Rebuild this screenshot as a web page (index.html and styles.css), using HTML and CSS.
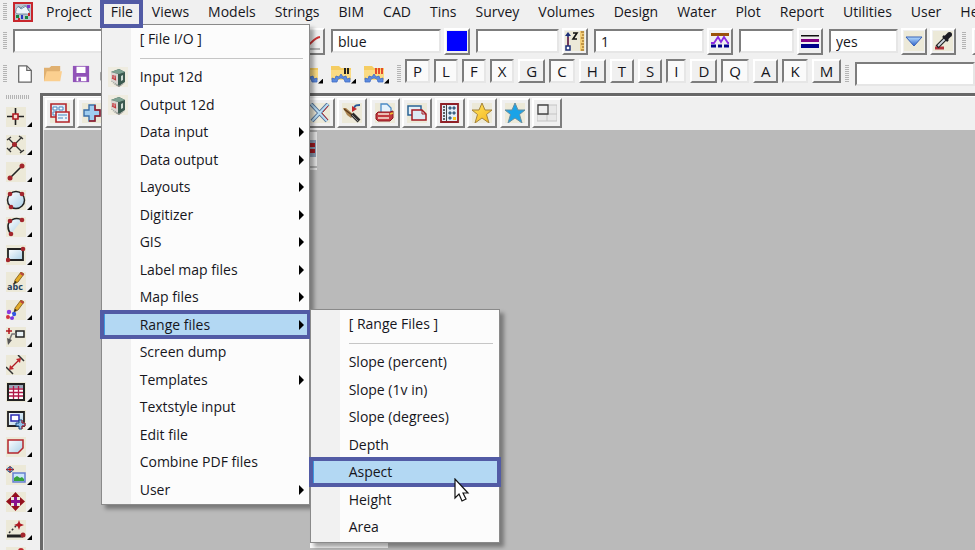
FILE: index.html
```html
<!DOCTYPE html>
<html lang="en">
<head>
<meta charset="utf-8">
<meta name="viewport" content="width=device-width, initial-scale=1">
<title>12d Model</title>
<link rel="stylesheet" href="styles.css">
</head>
<body>
<svg class="defs" aria-hidden="true">
  <defs>
    <linearGradient id="g-blue" x1="0" y1="0" x2="1" y2="1"><stop offset="0" stop-color="#fff"/><stop offset="1" stop-color="#a9cfe6"/></linearGradient>
    <linearGradient id="g-down" x1="0" y1="0" x2="0" y2="1"><stop offset="0" stop-color="#b5dcff"/><stop offset="1" stop-color="#2e62c8"/></linearGradient>
    <linearGradient id="g-gold" x1="0" y1="0" x2="1" y2="1"><stop offset="0" stop-color="#ffe45c"/><stop offset="1" stop-color="#f5b51e"/></linearGradient>
    <symbol id="i-plus" viewBox="0 0 20 20"><path d="M7 2h6v5h5v6h-5v5H7v-5H2V7h5z" fill="#9fcdf0" stroke="#3a6da6" stroke-width="1.4"/><path d="M13 2v5h5v6h-5v5H7" fill="none" stroke="#a31a22" stroke-width="1.4"/></symbol>
    <symbol id="i-folder-gear" viewBox="0 0 20 20"><path d="M0 2h8l2 2h10v12H0z" fill="#f5cd62"/><path d="M0 6h20v10H0z" fill="#fbdb83"/><path d="M1 18v-4l3 1 1-3 3 1 2-3 2 3 3-1 1 3 3-1v4h-5a4 4 0 0 0-8 0z" fill="#5b8ae0" stroke="#3f6cc4" stroke-width=".8"/></symbol>
    <symbol id="i-cube" viewBox="0 0 20 20"><path d="M0 0h20v20H0z" fill="#efece0"/><path d="M3 5l8-3 6 3v10l-6 4-8-5z" fill="#3c5a50"/><path d="M3 5l8-3 6 3-6 2z" fill="#7da191"/><path d="M3 5l7 2v11l-7-4z" fill="#d9d5d2"/><path d="M5 8v4M7 8.500l.5 5M4 11l4 2" stroke="#c4343a" stroke-width="1.300"/><path d="M13 9l2-1v5l-2 1z" fill="#cfdcd4"/><path d="M4 16l7 3 6-3-6 4z" fill="#777"/></symbol>
  </defs>
</svg>

<nav class="menubar" aria-label="Main menu">
  <span class="grip"></span>
  <svg class="app-icon" viewBox="0 0 20 20"><path d="M1 1h18v18H1z" fill="#b9c3cf" stroke="#c8262c" stroke-width="2"/><path d="M3 9c0-5 4-5 5-3 3-4 9-2 7 2 3 1 1 5-2 4H5c-2 0-3-2-2-3z" fill="#eef4f8" stroke="#5d7890" stroke-width=".8"/><path d="M5 4l3 3 5-3 3 5" stroke="#6f8fa8" fill="none"/><path d="M3 13h3v3H3zM12 14h3v3h-3z" fill="#17883d"/><path d="M8 13h2v4H8z" fill="#2737c3"/><path d="M15 11h2v3h-2zM5 16h2v2H5z" fill="#c8262c"/><path d="M14 3h3v3h-3z" fill="#7a35c9"/></svg>
  <ul class="menus">
    <li><a href="#">Project</a></li>
    <li class="open"><a href="#">File</a>
      <div class="popup file-popup">
        <ul>
          <li class="title">[ File I/O ]</li>
          <li class="rule"></li>
          <li><svg class="item-icon"><use href="#i-cube"/></svg><a href="#">Input 12d</a></li>
          <li><svg class="item-icon"><use href="#i-cube"/></svg><a href="#">Output 12d</a></li>
          <li class="more"><a href="#">Data input</a></li>
          <li class="more"><a href="#">Data output</a></li>
          <li class="more"><a href="#">Layouts</a></li>
          <li class="more"><a href="#">Digitizer</a></li>
          <li class="more"><a href="#">GIS</a></li>
          <li class="more"><a href="#">Label map files</a></li>
          <li class="more"><a href="#">Map files</a></li>
          <li class="more current"><a href="#">Range files</a>
            <div class="popup range-popup">
              <ul>
                <li class="title">[ Range Files ]</li>
                <li class="rule"></li>
                <li><a href="#">Slope (percent)</a></li>
                <li><a href="#">Slope (1v in)</a></li>
                <li><a href="#">Slope (degrees)</a></li>
                <li><a href="#">Depth</a></li>
                <li class="current"><a href="#">Aspect</a>
                  <svg class="pointer" viewBox="0 0 16 24"><path d="M1 1v19l4-4 3 7 4-2-3-6h5z" fill="#fff" stroke="#111" stroke-width="1.200"/></svg>
                </li>
                <li><a href="#">Height</a></li>
                <li><a href="#">Area</a></li>
              </ul>
            </div>
          </li>
          <li><a href="#">Screen dump</a></li>
          <li class="more"><a href="#">Templates</a></li>
          <li><a href="#">Textstyle input</a></li>
          <li><a href="#">Edit file</a></li>
          <li><a href="#">Combine PDF files</a></li>
          <li class="more"><a href="#">User</a></li>
        </ul>
      </div>
    </li>
    <li><a href="#">Views</a></li>
    <li><a href="#">Models</a></li>
    <li><a href="#">Strings</a></li>
    <li><a href="#">BIM</a></li>
    <li><a href="#">CAD</a></li>
    <li><a href="#">Tins</a></li>
    <li><a href="#">Survey</a></li>
    <li><a href="#">Volumes</a></li>
    <li><a href="#">Design</a></li>
    <li><a href="#">Water</a></li>
    <li><a href="#">Plot</a></li>
    <li><a href="#">Report</a></li>
    <li><a href="#">Utilities</a></li>
    <li><a href="#">User</a></li>
    <li><a href="#">Help</a></li>
  </ul>
</nav>

<div class="bar attributes">
  <span class="grip"></span>
  <div class="field"><input class="w-name" type="text" aria-label="Name"><button aria-label="Pick name"><svg viewBox="0 0 20 20"><path d="M2 15c6 2 8-8 16-9" stroke="#c33" stroke-width="2" fill="none"/><path d="M2 18h16" stroke="#777"/></svg></button></div>
  <div class="field"><input class="w-wide" type="text" value="blue" aria-label="Colour"><button aria-label="Pick colour"><svg viewBox="0 0 20 20"><path d="M0 0h20v20H0z" fill="#00f"/></svg></button></div>
  <div class="field"><input class="w-mid" type="text" aria-label="Height"><button aria-label="Pick height"><svg viewBox="0 0 20 20"><path d="M0 0h20v20H0z" fill="#ece9d8"/><path d="M3 3v12" stroke="#1c2f7a" stroke-width="1.600"/><path d="M0 5l3-4 3 4z" fill="#1c2f7a"/><path d="M3 6v9" stroke="#a02030"/><path d="M1 15h4v4H1z" fill="#fff" stroke="#1c2f7a" stroke-width="1.500"/><path d="M8 2h4L8 8h4" stroke="#111" stroke-width="1.600" fill="none"/><path d="M15 0h4v20h-4z" fill="#f4cf79"/><path d="M19 1h-3M19 4h-2M19 7h-3M19 10h-2M19 13h-3M19 16h-2M19 19h-3" stroke="#8b5a14"/></svg></button></div>
  <div class="field"><input class="w-wide" type="text" value="1" aria-label="Line style"><button aria-label="Pick line style"><svg viewBox="0 0 20 20"><path d="M1 2h18v3H1z" fill="#9a5208"/><path d="M1 12h3l4-6 3 5 3-5 4 6h1" fill="none" stroke="#8a2be2" stroke-width="1.800"/><path d="M1 15h5M8 15h4M14 15h5" stroke="#00008b" stroke-width="3"/></svg></button></div>
  <div class="field"><input class="w-small" type="text" aria-label="Weight"><button aria-label="Pick weight"><svg viewBox="0 0 20 20"><path d="M1 4h18v1.500H1z" fill="#111"/><path d="M1 8h18v3H1z" fill="#800080"/><path d="M1 13h18v4H1z" fill="#00008b"/></svg></button></div>
  <div class="field"><input class="w-yes" type="text" value="yes" aria-label="Tinable"><button aria-label="Show choices"><svg viewBox="0 0 20 20"><path d="M0 0h20v20H0z" fill="#ece9d8"/><path d="M2 6h16l-8 9z" fill="url(#g-down)" stroke="#3560b8"/></svg></button><button aria-label="Pick from string"><svg viewBox="0 0 20 20"><path d="M0 0h20v20H0z" fill="#ece9d8"/><path d="M2 17h9" stroke="#b03038" stroke-width="3"/><path d="M4 16l9-9" stroke="#222" stroke-width="4"/><path d="M5 15l7-7" stroke="#cfd8e0" stroke-width="1.800"/><path d="M10 5l5 5" stroke="#1c1c22" stroke-width="2.500"/><path d="M13 7l3-3" stroke="#1c1c22" stroke-width="5"/><circle cx="16.500" cy="3.500" r="2.500" fill="#1c1c22"/></svg></button></div>
  <span class="grip"></span>
  <button aria-label="Text style"><svg viewBox="0 0 20 20"><path d="M0 17c3 0 5-10 10-12" stroke="#7b50c8" stroke-width="3" fill="none"/></svg></button>
</div>

<div class="bar files">
  <span class="grip"></span>
  <div class="flat">
    <button aria-label="New"><svg viewBox="0 0 20 20"><path d="M3 1h9l5 5v13H3z" fill="#fff" stroke="#666" stroke-width="1.400"/><path d="M12 1v5h5" fill="none" stroke="#666" stroke-width="1.400"/></svg></button>
    <button aria-label="Open"><svg viewBox="0 0 20 20"><path d="M0 18V3h6l2-2h10v6" fill="#e0b070"/><path d="M0 18L3 7h17l-2 11z" fill="#fbcf8f"/></svg></button>
    <button aria-label="Save"><svg viewBox="0 0 20 20"><path d="M1 1h18v18H1z" fill="#9153b8"/><path d="M5 2h10v7H5zM5 13h11v5H5z" fill="#fff"/><path d="M7 14h3v4H7z" fill="#9153b8"/></svg></button>
    <button aria-label="Print"><svg viewBox="0 0 20 20"><path d="M1 8h18v9H1z" fill="#aaa" stroke="#666"/><path d="M5 1h10v7H5z" fill="#fff" stroke="#666"/></svg></button>
  </div>
  <div class="flat drop">
    <button aria-label="Folder 1"><svg><use href="#i-folder-gear"/></svg></button>
    <button aria-label="Folder 2"><svg><use href="#i-folder-gear"/></svg></button>
    <button aria-label="Folder 3"><svg><use href="#i-folder-gear"/></svg></button>
    <button aria-label="Folder 4"><svg><use href="#i-folder-gear"/></svg></button>
    <button aria-label="Folder 5"><svg><use href="#i-folder-gear"/></svg></button>
    <button aria-label="Folder 6"><svg><use href="#i-folder-gear"/></svg></button>
    <button aria-label="Folder settings, black"><svg viewBox="0 0 20 20"><use href="#i-folder-gear"/><path d="M14 4v6M17 4v6" stroke="#222" stroke-width="2"/></svg></button>
    <button aria-label="Folder settings, red"><svg viewBox="0 0 20 20"><use href="#i-folder-gear"/><path d="M12 4v6M15 4v6M18 4v6" stroke="#e02818" stroke-width="1.600"/></svg></button>
  </div>
  <span class="grip"></span>
  <div class="snaps">
    <button class="on">P</button><button class="on">L</button><button class="on">F</button><button class="on">X</button><button>G</button><button class="on">C</button><button>H</button><button>T</button><button>S</button><button class="on">I</button><button>D</button><button class="on">Q</button><button>A</button><button class="on">K</button><button>M</button>
  </div>
  <span class="grip"></span>
  <input class="command" type="text" aria-label="Command">
</div>

<main class="desk">
  <aside class="tools" aria-label="Create tools">
    <span class="grip across"></span>
    <div class="tool-list">
      <button aria-label="Point"><svg viewBox="0 0 20 20"><path d="M9.500 1v17M1 9.500h17" stroke="#222" stroke-width="1.600"/><path d="M7 7h5v5H7z" fill="#f5d9d0" stroke="#b01820" stroke-width="1.600"/></svg></button>
      <button aria-label="Intersection"><svg viewBox="0 0 20 20"><path d="M3 4l13 13M16 2L3 15M1 5l4-3M13 1l4 3M14 18l4-3M1 13l4 4" stroke="#333" stroke-width="1.300"/><circle cx="8.500" cy="9.500" r="2.500" fill="#a3262c"/></svg></button>
      <button aria-label="Line"><svg viewBox="0 0 20 20"><path d="M4 16L16 4" stroke="#222" stroke-width="1.600"/><circle cx="4" cy="16" r="2.500" fill="#a3262c"/><circle cx="16" cy="4" r="2.500" fill="#a3262c"/></svg></button>
      <button aria-label="Circle"><svg viewBox="0 0 20 20"><circle cx="10" cy="10" r="8.500" fill="url(#g-blue)" stroke="#222" stroke-width="1.500"/><circle cx="4" cy="4" r="2.300" fill="#a3262c"/><circle cx="16" cy="4" r="2.300" fill="#a3262c"/><circle cx="5" cy="17" r="2.300" fill="#a3262c"/></svg></button>
      <button aria-label="Arc"><svg viewBox="0 0 20 20"><path d="M16 3C9-1 2 4 2 9c0 4 1 6 3 8z" fill="url(#g-blue)"/><path d="M16 3C9-1 2 4 2 9c0 4 1 6 3 8" fill="none" stroke="#222" stroke-width="1.600"/><circle cx="4" cy="4" r="2.300" fill="#a3262c"/><circle cx="16" cy="3" r="2.300" fill="#a3262c"/><circle cx="5" cy="17" r="2.300" fill="#a3262c"/></svg></button>
      <button aria-label="Rectangle"><svg viewBox="0 0 20 20"><path d="M2 4h15v11H2z" fill="url(#g-blue)" stroke="#222" stroke-width="1.800"/><circle cx="17" cy="4" r="2.300" fill="#a3262c"/><circle cx="2" cy="15" r="2.300" fill="#a3262c"/></svg></button>
      <button aria-label="Text"><svg viewBox="0 0 20 20"><path d="M8 12l1-4 6-8 3 2-6 8z" fill="#e3ac28" stroke="#7a5412" stroke-width=".8"/><path d="M15 0l3 2-1 2-3-2z" fill="#b84642"/><path d="M8 12l1-3 2 1z" fill="#222"/><text class="abc" x="1" y="18">abc</text></svg></button>
      <button aria-label="Symbol"><svg viewBox="0 0 20 20"><path d="M8 12l1-4 6-8 3 2-6 8z" fill="#e3ac28" stroke="#7a5412" stroke-width=".8"/><path d="M15 0l3 2-1 2-3-2z" fill="#b84642"/><path d="M8 12l1-3 2 1z" fill="#222"/><circle cx="3" cy="12" r="2.200" fill="#8a3be0"/><circle cx="8" cy="14" r="2.200" fill="#3458e0"/><circle cx="2" cy="17" r="2" fill="#d23040"/><circle cx="6" cy="18" r="2" fill="#7a35e0"/><circle cx="5" cy="15" r="1.500" fill="#fff"/></svg></button>
      <button aria-label="Leader"><svg viewBox="0 0 20 20"><path d="M3 1v6M0 4h6" stroke="#b01820" stroke-width="1.500"/><path d="M10 4h8v6h-8z" fill="#e8f1f5" stroke="#222" stroke-width="1.500"/><path d="M10 7H6L3 14" fill="none" stroke="#777" stroke-width="1.500"/><path d="M1 11l5 2-4 5z" fill="#555"/></svg></button>
      <button aria-label="Dimension"><svg viewBox="0 0 20 20"><path d="M0 12l7 7M12 0l6 6" stroke="#333" stroke-width="1.500"/><path d="M5 13l9-9" stroke="#b01820" stroke-width="1.300"/><path d="M3 15l1-5 4 4zM15 3l-1 5-4-4z" fill="#c0272d"/></svg></button>
      <button aria-label="Table"><svg viewBox="0 0 20 20"><path d="M2 2h16v16H2z" fill="#fff" stroke="#222" stroke-width="2"/><path d="M3 3h14v3H3z" fill="#9aa6b8"/><path d="M7.500 4v13M12.500 4v13M3 7h14M3 10.500h14M3 14h14" stroke="#b01848" stroke-width="1.300"/></svg></button>
      <button aria-label="Add view"><svg viewBox="0 0 20 20"><path d="M2 2h16v14H2z" fill="url(#g-blue)" stroke="#222" stroke-width="1.800"/><path d="M5 5h8v6H5z" fill="#fff" stroke="#2b2bb0" stroke-width="1.500"/><path d="M13 10h3v3h3v3h-3v3h-3v-3h-3v-3h3z" fill="#8fc4ec" stroke="#15467c"/><path d="M16 10v3h3v3h-3v3" fill="none" stroke="#c0272d"/></svg></button>
      <button aria-label="Polygon"><svg viewBox="0 0 20 20"><path d="M2 3h15v8l-5 5H2z" fill="url(#g-blue)" stroke="#b4262c" stroke-width="1.500"/></svg></button>
      <button aria-label="Image"><svg viewBox="0 0 20 20"><path d="M4 1v7M0 4.500h8" stroke="#b01820" stroke-width="1.300"/><circle cx="4" cy="4.500" r="2.500" fill="none" stroke="#285a9a"/><path d="M7 8h12v9H7z" fill="#c8e5fa" stroke="#6780d0" stroke-width="1.500"/><path d="M8 16v-3l3-2 3 2 2-1 2 2v2z" fill="#35a33a"/></svg></button>
      <button aria-label="Move"><svg viewBox="0 0 20 20"><path d="M9.500 3v14M3 9.500h14" stroke="#8a128e" stroke-width="3"/><path d="M9.500 0L14 5H5zM9.500 19L5 14h9zM0 9.500L5 5v9zM19 9.500L14 14V5z" fill="#94101c"/></svg></button>
      <button aria-label="Measure"><svg viewBox="0 0 20 20"><path d="M1 16h16" stroke="#222" stroke-width="3"/><path d="M3 13l9-9" stroke="#333" stroke-width="1.500" stroke-dasharray="2 2"/><path d="M13 0l1.200 3.500L18 5l-3.800 1.500L13 10l-1.200-3.500L8 5l3.800-1.500z" fill="#b01820"/><circle cx="17" cy="15" r="2.500" fill="#a3262c"/></svg></button>
      <button aria-label="Edit point"><svg viewBox="0 0 20 20"><path d="M4 16L15 4" stroke="#222" stroke-width="1.600"/><circle cx="15" cy="4" r="3" fill="#c0272d"/></svg></button>
    </div>
  </aside>

  <section class="workspace">
    <div class="view-bar">
      <button aria-label="Views"><svg viewBox="0 0 20 20"><path d="M1 1h15v13H1z" fill="#d8e9f6" stroke="#b4262c" stroke-width="1.600"/><path d="M3 4h4v3H3zM9 4h4v3H9zM3 9h4v3H3z" fill="#fff" stroke="#4686c0"/><path d="M6 9h13v10H6z" fill="#eaf3fa" stroke="#b4262c" stroke-width="1.600"/><path d="M8 12h9M8 15h5M15 15h2" stroke="#4686c0"/></svg></button>
      <button aria-label="Add"><svg><use href="#i-plus"/></svg></button>
      <button aria-label="Add model"><svg><use href="#i-plus"/></svg></button>
      <button aria-label="Add string"><svg><use href="#i-plus"/></svg></button>
      <button aria-label="Add tin"><svg><use href="#i-plus"/></svg></button>
      <button aria-label="Add grid"><svg><use href="#i-plus"/></svg></button>
      <button aria-label="Add plot"><svg><use href="#i-plus"/></svg></button>
      <button aria-label="Add label"><svg><use href="#i-plus"/></svg></button>
      <button aria-label="Settings"><svg viewBox="0 0 20 20"><path d="M1 1l16 17M18 1L2 18" stroke="#55749a" stroke-width="4"/><path d="M1 1l16 17M18 1L2 18" stroke="#b8dcf2" stroke-width="2"/><path d="M12 10l6 7M18 3l-5 6" stroke="#b4262c"/></svg></button>
      <button aria-label="Redraw"><svg viewBox="0 0 20 20"><path d="M1 5l3 0 8 7-3 3-4-3z" fill="#a9834f"/><path d="M2 6l8 6" stroke="#5b3a1c" stroke-width="1.300"/><path d="M10 11l7 7" stroke="#2c2c2c" stroke-width="4"/><path d="M10 12l6 6" stroke="#888"/><path d="M12 5c1-3 3-3 6-3" stroke="#285a9a" stroke-width="2" fill="none"/><path d="M10 3l0 6 5-3z" fill="#c0272d"/></svg></button>
      <button aria-label="Print view"><svg viewBox="0 0 20 20"><path d="M6 10V1h6l4 4v5z" fill="#e5f2fc" stroke="#4b8ac8" stroke-width="1.300"/><path d="M3 9h12l3-1v7l-3 3H3l-2-2v-5z" fill="#c23a40" stroke="#8c1820"/><path d="M3 11h11M3 15h11" stroke="#f8e8d8" stroke-width="1.500"/><path d="M15 11l3-1" stroke="#f0c030" stroke-width="1.500"/></svg></button>
      <button aria-label="Copy view"><svg viewBox="0 0 20 20"><path d="M1 3h13v9H1z" fill="#e5f0f8" stroke="#2a6496" stroke-width="1.500"/><path d="M5 7h10l4 4v6H5z" fill="#dceaf4" stroke="#a31a22" stroke-width="1.500"/><path d="M15 7v4h4" stroke="#a31a22" fill="none"/></svg></button>
      <button aria-label="Calculator"><svg viewBox="0 0 20 20"><path d="M1 1h17v18H1z" fill="#e3eff8" stroke="#8f2026" stroke-width="1.800"/><path d="M6.500 2v16" stroke="#444"/><path d="M3 4h2M3 7h2M3 10h2M3 13h2M3 16h2" stroke="#333" stroke-width="1.300"/><path d="M9 4h2v2H9zM13 4h2v2h-2zM9 9h2v2H9zM13 9h2v2h-2zM9 14h2v2H9z" fill="#4a7a9a" stroke="#355a78"/><path d="M13 14h3v3h-3z" fill="#f6c820"/></svg></button>
      <button aria-label="Favourites"><svg viewBox="0 0 20 20"><path d="M10 0l3 7h7l-5.500 4.500L17 20l-7-5-7 5 2.500-8.500L0 7h7z" fill="url(#g-gold)" stroke="#a5843c"/></svg></button>
      <button aria-label="User favourites"><svg viewBox="0 0 20 20"><path d="M10 0l3 7h7l-5.500 4.500L17 20l-7-5-7 5 2.500-8.500L0 7h7z" fill="#1aa3e8" stroke="#658da0"/></svg></button>
      <button aria-label="Tile views"><svg class="plain" viewBox="0 0 20 20"><path d="M0 2h20v16H0zM10 2v16M0 11h20" fill="#e8e8e8" stroke="#c4c4c4"/><path d="M1 2h10v9H1z" fill="#eee" stroke="#444" stroke-width="1.300"/></svg></button>
    </div>
    <div class="canvas">
      <svg class="view-scrap" viewBox="0 0 16 40"><path d="M0 0h16v40H0z" fill="#e2e2e2"/><path d="M0 1h16M0 37h16" stroke="#777"/><path d="M9 10h6v17H9z" fill="#8c9db4"/><path d="M9 13h5v4H9zM9 19h5v4H9z" fill="#a31a22"/></svg>
      <div class="view-edge"></div>
    </div>
  </section>
</main>
</body>
</html>
```
FILE: styles.css
```css
:root {
  --face: #f0f0f0;
  --shade: #7d7d7d;
  --beige: #ece9d8;
  --ring: #525ba5;
  --pick: #b3d8f3;
}

* { box-sizing: border-box; }

body {
  margin: 0;
  height: 100vh;
  display: flex;
  flex-direction: column;
  overflow: hidden;
  background: var(--face);
  color: #16161c;
  font: 14px/20px "Open Sans", "Noto Sans", sans-serif;
}

ul { margin: 0; padding: 0; list-style: none; }
a { color: inherit; text-decoration: none; }
button, input { font: inherit; color: inherit; margin: 0; border-radius: 0; }
svg { display: block; flex: none; }
.defs { position: absolute; width: 0; height: 0; }

.grip {
  flex: none;
  width: 4px;
  height: 18px;
  background: repeating-linear-gradient(#b4b4b4 0 1px, var(--face) 1px 2px);
}
.grip.across {
  display: block;
  width: 24px;
  height: 4px;
  background: repeating-linear-gradient(90deg, #b4b4b4 0 1px, var(--face) 1px 2px);
}

/* Menu bar */
.menubar {
  display: flex;
  align-items: center;
  flex: none;
  height: 24px;
  padding-left: 3px;
}
.app-icon { width: 20px; height: 20px; margin: 0 4px 0 6px; }
.menus { display: flex; gap: 1px; white-space: nowrap; }
.menus > li { position: relative; padding: 2px 9px; }
.menus > .open::after {
  content: "";
  position: absolute;
  z-index: 3;
  inset: 0 -1px -4px -2px;
  border: 4px solid var(--ring);
}

/* Drop-down menus */
.popup {
  position: absolute;
  z-index: 2;
  border: 1px solid #8a8a8a;
  background: linear-gradient(90deg, #f1f1f1 29px, #fcfcfc 29px);
  box-shadow: 4px 4px 4px rgba(0, 0, 0, .35);
}
.file-popup { top: 24px; left: -1px; width: 209px; }
.range-popup { top: -2px; left: 208px; width: 190px; z-index: 4; }
.popup ul { display: grid; grid-template-rows: 28px 10px; grid-auto-rows: 28px 27px; padding-bottom: 1px; }
.popup li { position: relative; display: flex; align-items: center; padding-left: 38px; }
.popup .rule::before { content: ""; flex: 1; height: 1px; margin-right: 6px; background: #c6c6c6; }
.item-icon { position: absolute; left: 6px; top: 4px; width: 20px; height: 20px; }
.more::before {
  content: "";
  position: absolute;
  right: 5px;
  top: 9px;
  border: solid transparent;
  border-width: 5px 0 5px 5px;
  border-left-color: #000;
}
.popup .current { background: linear-gradient(90deg, #3d97df 3px, var(--pick) 3px); }
.popup .current::after {
  content: "";
  position: absolute;
  z-index: 3;
  inset: -1px -2px;
  border: 4px solid var(--ring);
}
.pointer { position: absolute; z-index: 5; left: 143px; top: 20px; width: 16px; height: 24px; }

/* Tool bars */
.bar { display: flex; align-items: center; flex: none; padding-left: 3px; }
.attributes { height: 34px; gap: 6px; }
.files { height: 31px; margin-bottom: 4px; gap: 4px; }
.field { display: flex; align-items: center; flex: none; gap: 3px; }

input {
  height: 24px;
  padding: 0 5px;
  background: #fff;
  border: 2px solid;
  border-color: var(--shade) #e6e6e6 #e6e6e6 var(--shade);
}
.w-name { width: 283px; }
.w-wide { width: 110px; }
.w-mid { width: 83px; }
.w-small { width: 55px; }
.w-yes { width: 69px; }
.command { flex: 1; min-width: 0; margin-left: 2px; }

button {
  flex: none;
  display: flex;
  align-items: center;
  justify-content: center;
  padding: 0;
  background: var(--face);
  border: 2px solid;
  border-color: #fff var(--shade) var(--shade) #fff;
}
.attributes button { width: 26px; height: 27px; }
.attributes svg { width: 20px; height: 20px; }

.flat { display: flex; }
.flat button { width: 28px; border: 0; background: none; }
.flat svg { width: 18px; height: 18px; }
.flat.drop { margin-left: 2px; }
.flat.drop button { width: 33px; align-items: flex-end; }
.drop svg { width: 20px; height: 20px; }
.drop button::after, .tool-list button::after {
  content: "";
  width: 5px;
  height: 5px;
  background: #000;
  clip-path: polygon(100% 0, 100% 100%, 0 100%);
}

.snaps { display: flex; align-self: flex-start; gap: 4px; padding-top: 1px; font-size: 15px; }
.snaps button { height: 24px; padding: 0 6px; }
.snaps .on {
  background: #fafafa;
  border-color: var(--shade) #e6e6e6 #e6e6e6 var(--shade);
}

/* Left tool palette and work area */
.desk { flex: 1; min-height: 0; display: flex; }
.tools { flex: none; width: 40px; padding: 2px 0 0 6px; overflow: hidden; }
.tool-list { display: grid; grid-auto-rows: 28px 27px; margin-top: 8px; }
.tool-list button { width: 26px; height: 20px; border: 0; background: none; align-items: flex-end; justify-content: flex-start; gap: 1px; }
.tool-list svg { width: 20px; height: 20px; background: var(--beige); }
.abc { font: bold 9px/9px "Open Sans", sans-serif; fill: #24405c; }

.workspace {
  flex: 1;
  min-width: 0;
  display: flex;
  flex-direction: column;
  border: solid #686868;
  border-width: 3px 0 0 3px;
}
.view-bar {
  flex: none;
  display: grid;
  grid-auto-flow: column;
  grid-auto-columns: 32px 33px;
  height: 34px;
  padding: 1px 2px;
  border-top: 1px solid #fff;
}
.view-bar button { width: 30px; height: 30px; }
.view-bar svg { width: 20px; height: 20px; background: var(--beige); }
.view-bar .plain { background: none; }
.canvas { position: relative; flex: 1; background: #bababa; border-left: 1px solid #e4e4e4; }
.view-scrap { position: absolute; left: 257px; top: 0; width: 16px; height: 40px; }
.view-edge { position: absolute; left: 266px; bottom: 2px; width: 78px; height: 12px; background: #fafafa; }
```
